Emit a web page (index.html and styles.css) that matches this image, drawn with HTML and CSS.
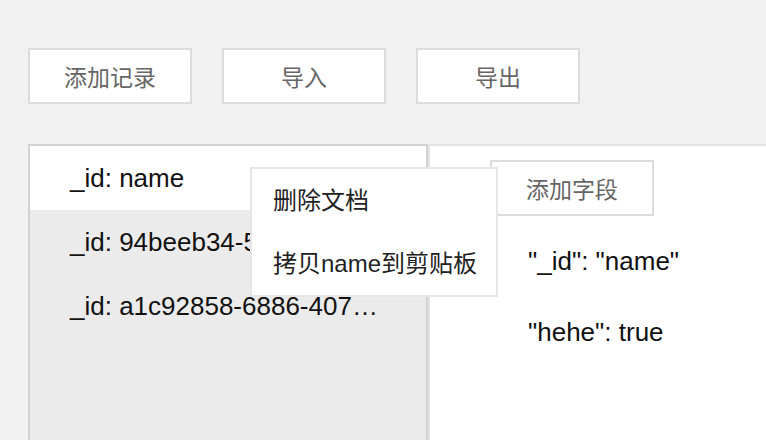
FILE: index.html
```html
<!DOCTYPE html>
<html lang="zh-CN">
<head>
<meta charset="utf-8">
<title>文档</title>
<link rel="stylesheet" href="styles.css">
</head>
<body>
<div class="toolbar">
  <button class="btn">添加记录</button>
  <button class="btn">导入</button>
  <button class="btn">导出</button>
</div>
<div class="main">
  <div class="list">
    <div class="row active">_id: name</div>
    <div class="row">_id: 94beeb34-5a1c-4f2e-9d3b-7c1a2b3c4d5e</div>
    <div class="row">_id: a1c92858-6886-4071-8a2b-9f0e1d2c3b4a</div>
  </div>
  <div class="detail">
    <button class="btn field-btn">添加字段</button>
    <div class="json">
      <div class="line">"_id": "name"</div>
      <div class="line">"hehe": true</div>
    </div>
  </div>
</div>
<div class="menu">
  <div class="menu-item">删除文档</div>
  <div class="menu-item">拷贝name到剪贴板</div>
</div>
</body>
</html>
```
FILE: styles.css
```css
* { box-sizing: border-box; }
html, body { margin: 0; padding: 0; }
body {
  width: 766px;
  height: 440px;
  overflow: hidden;
  background: #f2f2f2;
  font-family: "Liberation Sans", Arial, "Noto Sans CJK SC", sans-serif;
  color: #111;
  position: relative;
}
.toolbar {
  display: flex;
  gap: 30px;
  padding: 48px 0 0 28px;
  height: 144px;
}
.btn {
  width: 164px;
  height: 56px;
  background: #fff;
  border: 2px solid #dcdcdc;
  color: #666;
  font-family: "Noto Sans CJK SC", sans-serif;
  font-size: 23px;
  padding: 0;
  margin: 0;
  line-height: 1;
}
.main {
  display: flex;
  padding-left: 28px;
  height: 296px;
}
.list {
  width: 400px;
  background: #ebebeb;
  border: 2px solid #d2d2d2;
  border-bottom: none;
}
.row {
  height: 64px;
  line-height: 64px;
  padding: 0 36px 0 40px;
  font-size: 26px;
  white-space: nowrap;
  overflow: hidden;
  text-overflow: ellipsis;
}
.row.active { background: #fff; }
.detail {
  flex: 1;
  background: #fff;
  border-top: 2px solid #e3e3e3;
  border-left: 2px solid #e3e3e3;
  padding: 14px 0 0 60px;
}
.field-btn { display: block; }
.json {
  margin-top: 10px;
  padding-left: 38px;
  font-size: 26px;
}
.line { line-height: 71px; height: 71px; }
.menu {
  position: absolute;
  left: 250px;
  top: 167px;
  width: 248px;
  background: #fff;
  border: 2px solid #e6e6e6;
}
.menu-item {
  height: 63px;
  line-height: 63px;
  padding-left: 21px;
  font-family: "Liberation Sans", Arial, "Noto Sans CJK SC", sans-serif;
  font-size: 24px;
  color: #222;
  white-space: nowrap;
}
```
